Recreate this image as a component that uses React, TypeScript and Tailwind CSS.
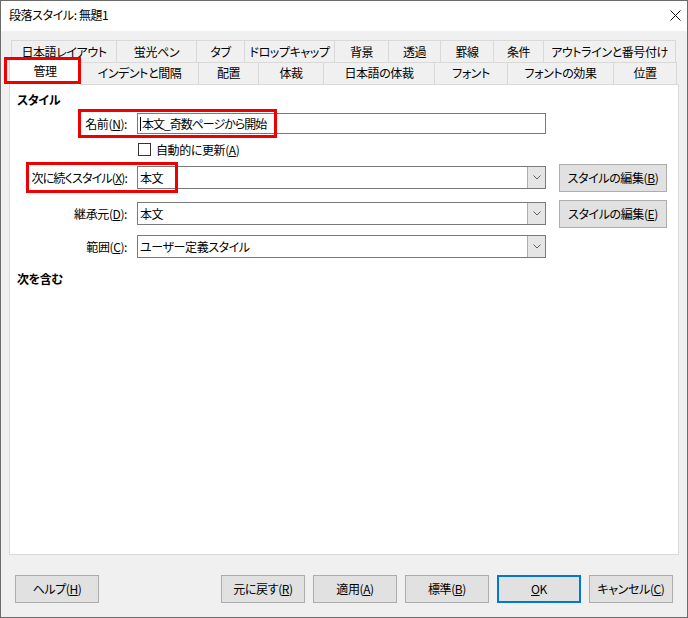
import React from 'react';

const rowOne = [
  { label: '日本語レイアウト', w: 'w-[106px]' },
  { label: '蛍光ペン', w: 'w-[80px]' },
  { label: 'タブ', w: 'w-[48px]' },
  { label: 'ドロップキャップ', w: 'w-[90px]' },
  { label: '背景', w: 'w-[54px]' },
  { label: '透過', w: 'w-[52px]' },
  { label: '罫線', w: 'w-[53px]' },
  { label: '条件', w: 'w-[50px]' },
  { label: 'アウトラインと番号付け', w: 'w-[132px]' },
];

const rowTwo = [
  { label: 'インデントと間隔', w: 'w-[118px]' },
  { label: '配置', w: 'w-[60px]' },
  { label: '体裁', w: 'w-[65px]' },
  { label: '日本語の体裁', w: 'w-[111px]' },
  { label: 'フォント', w: 'w-[73px]' },
  { label: 'フォントの効果', w: 'w-[106px]' },
  { label: '位置', w: 'w-[63px]' },
];

function Chevron() {
  return (
    <svg width="8" height="5" viewBox="0 0 8 5" className="block">
      <path d="M0.5 0.5 L4 4 L7.5 0.5" fill="none" stroke="#606060" strokeWidth="1" />
    </svg>
  );
}

function Combo({ value }: { value: string }) {
  return (
    <div className="w-[409px] h-[23px] border border-[#7a7a7a] bg-white flex items-stretch">
      <div className="flex-1 flex items-center pl-[2px]">{value}</div>
      <div className="w-[18px] bg-[#e5e5e5] border-l border-[#adadad] flex items-center justify-center">
        <Chevron />
      </div>
    </div>
  );
}

function Button({ children, primary = false, w = 'w-[84px]' }: { children: React.ReactNode; primary?: boolean; w?: string }) {
  return (
    <div
      className={`${w} h-[28px] flex items-center justify-center bg-[#e1e1e1] ${
        primary ? 'border-2 border-[#0078d7]' : 'border border-[#adadad]'
      }`}
    >
      {children}
    </div>
  );
}

export default function App() {
  return (
    <div className="relative w-[688px] h-[618px] border border-[#6b6b6b] bg-[#f0f0f0] flex flex-col text-[12px] leading-[16px] tracking-[-0.4px] text-black font-['Noto_Sans_CJK_JP','Noto_Sans',sans-serif] [font-feature-settings:'palt']">
      {/* title bar */}
      <div className="h-[30px] bg-white flex items-center justify-between pl-[8px] pr-[6px] pb-[2px]">
        <span>段落スタイル: 無題1</span>
        <svg width="11" height="11" viewBox="0 0 11 11">
          <path d="M0.5 0.5 L10.5 10.5 M10.5 0.5 L0.5 10.5" stroke="#111" strokeWidth="1" />
        </svg>
      </div>

      <div className="flex flex-col pt-[9px]">
        {/* tab row 1 */}
        <div className="flex h-[22px] ml-[10px]">
          {rowOne.map((t, i) => (
            <div
              key={t.label}
              className={`${t.w} h-full flex items-center justify-center border-t border-r border-[#d9d9d9] ${
                i === 0 ? 'border-l' : ''
              }`}
            >
              {t.label}
            </div>
          ))}
        </div>

        {/* tab row 2 */}
        <div className="flex items-end h-[22px] ml-[8px]">
          <div className="relative z-10 w-[72px] h-[27px] -mb-px bg-white border-t border-l border-r border-[#d9d9d9] flex items-center justify-center pb-[2px]">
            管理
          </div>
          {rowTwo.map((t) => (
            <div
              key={t.label}
              className={`${t.w} h-full flex items-center justify-center border-t border-r border-[#d9d9d9] pb-[1px]`}
            >
              {t.label}
            </div>
          ))}
        </div>

        {/* panel */}
        <div className="ml-[8px] w-[670px] h-[471px] bg-white border border-[#d9d9d9] flex flex-col pt-[7px] pl-[7px]">
          <div className="font-bold">スタイル</div>

          <div className="flex items-center mt-[5px]">
            <div className="w-[111px] text-right pr-[1px]">
              名前(<u>N</u>):
            </div>
            <div className="ml-[9px] w-[409px] h-[21px] border border-[#7a7a7a] flex items-center pl-[2px] tracking-[-1px]">
              <span className="w-px h-[14px] bg-black mr-[1px]" />
              本文_奇数ページから開始
            </div>
          </div>

          <div className="flex items-center mt-[9px] ml-[121px] h-[13px]">
            <div className="w-[13px] h-[13px] border border-[#333] bg-white" />
            <span className="ml-[5px]">
              自動的に更新(<u>A</u>)
            </span>
          </div>

          <div className="flex items-center mt-[8px] h-[27px]">
            <div className="w-[111px] text-right pr-[1px] tracking-[-0.8px]">
              次に続くスタイル(<u>X</u>):
            </div>
            <div className="ml-[9px]">
              <Combo value="本文" />
            </div>
            <div className="ml-[13px]">
              <Button w="w-[108px]">
                スタイルの編集(<u>B</u>)
              </Button>
            </div>
          </div>

          <div className="flex items-center mt-[9px] h-[27px]">
            <div className="w-[111px] text-right pr-[1px]">
              継承元(<u>D</u>):
            </div>
            <div className="ml-[9px]">
              <Combo value="本文" />
            </div>
            <div className="ml-[13px]">
              <Button w="w-[108px]">
                スタイルの編集(<u>E</u>)
              </Button>
            </div>
          </div>

          <div className="flex items-center mt-[8px] h-[23px]">
            <div className="w-[111px] text-right pr-[1px]">
              範囲(<u>C</u>):
            </div>
            <div className="ml-[9px]">
              <Combo value="ユーザー定義スタイル" />
            </div>
          </div>

          <div className="font-bold mt-[13px]">次を含む</div>
        </div>

        {/* bottom buttons */}
        <div className="flex mt-[20px] ml-[14px]">
          <Button>
            ヘルプ(<u>H</u>)
          </Button>
          <div className="ml-[122px] flex gap-[8px]">
            <Button>
              元に戻す(<u>R</u>)
            </Button>
            <Button>
              適用(<u>A</u>)
            </Button>
            <Button>
              標準(<u>B</u>)
            </Button>
            <Button primary>
              <u>O</u>K
            </Button>
            <Button>
              キャンセル(<u>C</u>)
            </Button>
          </div>
        </div>
      </div>

      {/* red annotation boxes */}
      <div className="absolute z-20 left-[3px] top-[56px] w-[77px] h-[27px] border-[3px] border-[#ee0000] pointer-events-none" />
      <div className="absolute z-20 left-[77px] top-[108px] w-[199px] h-[29px] border-[3px] border-[#ee0000] pointer-events-none" />
      <div className="absolute z-20 left-[25px] top-[161px] w-[152px] h-[31px] border-[3px] border-[#ee0000] pointer-events-none" />
    </div>
  );
}
